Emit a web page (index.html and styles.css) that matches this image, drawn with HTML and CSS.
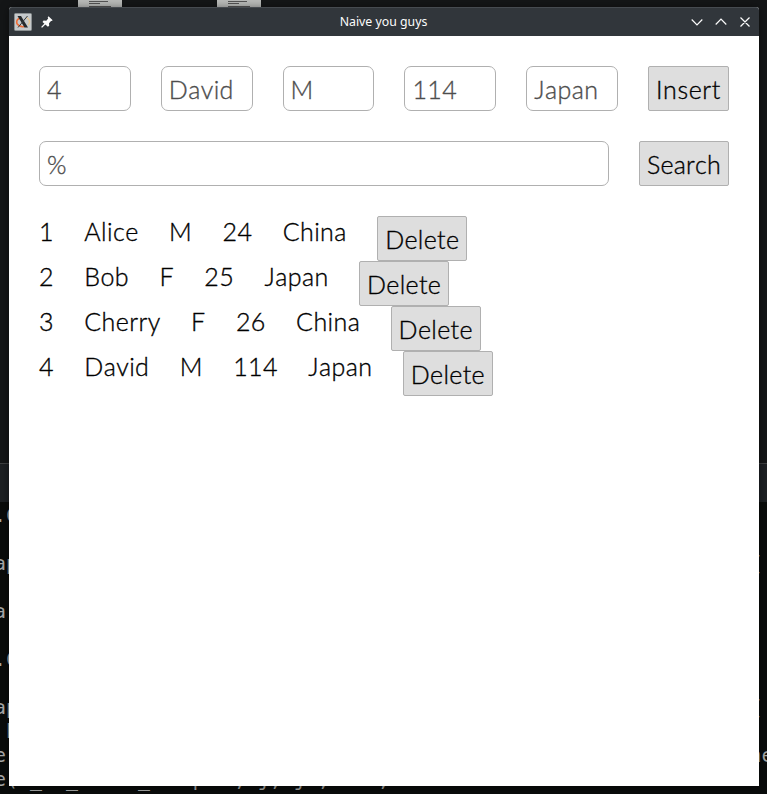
FILE: index.html
```html
<!DOCTYPE html>
<html lang="en">
<head>
<meta charset="utf-8">
<title>Naive you guys</title>
<link rel="stylesheet" href="styles.css">
</head>
<body>
<div class="desktop">
  <div class="file file-a"><i></i><i></i><i></i></div>
  <div class="file file-b"><i></i><i></i><i></i></div>
  <div class="terminal">
    <div class="terminal-bar"></div>
<pre class="terminal-text">.C

ap                                                             {

a

.C

ap                                                             {
 h
e                                                              ne
e( _  _     _   q   , j, j ,    ,</pre>
  </div>
  <div class="window">
    <header class="titlebar">
      <svg class="app-icon" viewBox="0 0 18 18" width="18" height="18">
        <rect x=".5" y=".5" width="17" height="17" rx="1" fill="#c5c9cb" stroke="#8b9092"/>
        <path d="M12.5 4.5C16 6.500 16.500 10 14 12" fill="none" stroke="#e9c58c" stroke-width="1.400"/>
        <path d="M6 5C2 6.500 1.500 10.500 5 12.500c2 1.300 5 1.300 7 .5" fill="none" stroke="#ef6c35" stroke-width="1.500"/>
        <path d="M3.500 3h3.500l7 11.500h-3.500z" fill="#25292c"/>
        <path d="M13.500 3L4 14.500" stroke="#33383b" stroke-width="1"/>
      </svg>
      <svg class="pin" viewBox="0 0 12 12" width="12" height="12">
        <path d="M7.500.3l4.200 3.900-1.100.9-.6-.2-2 2.300.2 2.500-1.300 1.100L1.500 5.900l1.100-1.300 2.700.2 1.900-2.200-.5-1.100z" fill="#fcfcfc"/>
        <path d="M4.200 7.800L.6 11.400" stroke="#fcfcfc" stroke-width="1.300"/>
      </svg>
      <span class="title">Naive you guys</span>
      <svg class="controls" viewBox="0 0 60 12" width="60" height="12" fill="none" stroke="#fcfcfc" stroke-width="1.200">
        <path d="M.7 3.500L6 8.800l5.300-5.300M24.700 8.500L30 3.200l5.300 5.300M49.500 1.500l9 9M58.500 1.500l-9 9"/>
      </svg>
    </header>
    <main class="content">
      <div class="row">
        <div class="field">4</div>
        <div class="field">David</div>
        <div class="field">M</div>
        <div class="field">114</div>
        <div class="field">Japan</div>
        <div class="button insert">Insert</div>
      </div>
      <div class="row">
        <div class="field">%</div>
        <div class="button search">Search</div>
      </div>
      <div class="list">
        <div class="record"><span>1</span><span>Alice</span><span>M</span><span>24</span><span>China</span><div class="button">Delete</div></div>
        <div class="record"><span>2</span><span>Bob</span><span>F</span><span>25</span><span>Japan</span><div class="button">Delete</div></div>
        <div class="record"><span>3</span><span>Cherry</span><span>F</span><span>26</span><span>China</span><div class="button">Delete</div></div>
        <div class="record"><span>4</span><span>David</span><span>M</span><span>114</span><span>Japan</span><div class="button">Delete</div></div>
      </div>
    </main>
  </div>
</div>
</body>
</html>
```

FILE: styles.css
```css
* { box-sizing: border-box; }
body { margin: 0; }
.desktop {
  position: relative;
  width: 767px;
  height: 794px;
  overflow: hidden;
  background: #141617;
}
.file {
  position: absolute;
  top: 0;
  width: 44px;
  height: 8px;
  padding: 1px 0 0 11px;
  background: #b9bbb9;
}
.file-a { left: 78px; }
.file-b { left: 217px; }
.file i {
  display: block;
  width: 19px;
  height: 1px;
  margin-bottom: 1px;
  background: #555;
}
.file i:nth-child(2) { width: 11px; }
.file i:nth-child(3) { width: 22px; margin-top: 2px; }
.terminal {
  position: absolute;
  top: 463px;
  left: 0;
  width: 767px;
  height: 331px;
  background: #0a0c0b;
}
.terminal-bar {
  height: 39px;
  border-top: 1px solid #3f4142;
  background: #1d2023;
}
.terminal-text {
  margin: 2px 0 0 -6px;
  font: 19.930px/24px "DejaVu Sans Mono", monospace;
  color: #a9aaa9;
}
.window {
  position: absolute;
  left: 9px;
  top: 7px;
  width: 750px;
  height: 779px;
  background: #fff;
  border-radius: 3px 3px 0 0;
  box-shadow: 0 1px 8px rgba(0, 0, 0, .5);
}
.titlebar {
  display: grid;
  grid-template-columns: 18px 12px 1fr 60px;
  column-gap: 8px;
  align-items: center;
  height: 29px;
  padding: 0 8px 0 5px;
  background: #31363b;
  border-top: 1px solid #464b50;
  border-radius: 3px 3px 0 0;
}
.titlebar .title {
  font: 12.300px/18px "Noto Sans", sans-serif;
  color: #fcfcfc;
  text-align: center;
  padding-left: 24px;
}
.app-icon, .pin, .controls { display: block; }
.pin { margin-left: 1px; }
.content {
  display: flex;
  flex-direction: column;
  gap: 30px;
  padding: 30px;
  font: 300 25px/30px Lato, sans-serif;
  font-kerning: none;
  letter-spacing: .4px;
  -webkit-text-stroke: .35px currentColor;
  color: #000;
}
.row { display: flex; gap: 30px; }
.field {
  flex: 1 1 0;
  min-width: 0;
  height: 45px;
  padding: 7px;
  border: 1px solid #b0b0b0;
  border-radius: 7px;
  color: #4d4d4d;
  white-space: nowrap;
}
.button {
  width: 90px;
  height: 45px;
  padding: 7px;
  border: 1px solid #b0b0b0;
  border-radius: 2px;
  background: #dedede;
  letter-spacing: .33px;
}
.insert { width: 81px; letter-spacing: .6px; }
.search { letter-spacing: .15px; }
.record { display: flex; gap: 30.400px; height: 45px; }
```
